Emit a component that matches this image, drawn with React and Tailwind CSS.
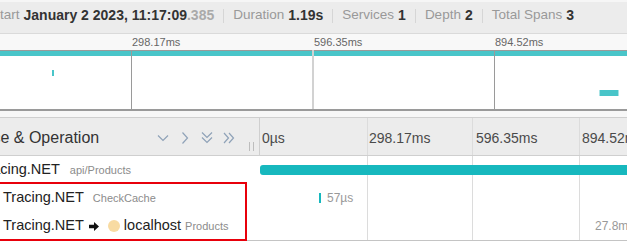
import React from "react";

const Sep = () => <div className="mx-[9px] h-[14px] w-px bg-[#d6d6d6]" />;

const ChevDown = () => (
  <svg width="12" height="12" viewBox="0 0 12 12" fill="none" stroke="#8fa2b8" strokeWidth="1.2">
    <path d="M1 3.5 L6 8.5 L11 3.5" />
  </svg>
);
const ChevRight = () => (
  <svg width="12" height="12" viewBox="0 0 12 12" fill="none" stroke="#8fa2b8" strokeWidth="1.2">
    <path d="M3.5 0.5 L8.5 6 L3.5 11.5" />
  </svg>
);
const DChevDown = () => (
  <svg width="12" height="14" viewBox="0 0 12 14" fill="none" stroke="#8fa2b8" strokeWidth="1.2">
    <path d="M1 1.5 L6 6.5 L11 1.5" />
    <path d="M1 6.5 L6 11.5 L11 6.5" />
  </svg>
);
const DChevRight = () => (
  <svg width="12" height="12" viewBox="0 0 12 12" fill="none" stroke="#8fa2b8" strokeWidth="1.2">
    <path d="M1 1 L5.5 6 L1 11" />
    <path d="M6 1 L10.5 6 L6 11" />
  </svg>
);

const GridLines = () => (
  <div className="col-start-1 row-start-1 flex h-full">
    <div className="w-[107px] shrink-0" />
    <div className="w-[105px] shrink-0 border-l border-[#dcdcdc]" />
    <div className="w-[107px] shrink-0 border-l border-[#dcdcdc]" />
    <div className="w-[107px] shrink-0 border-l border-[#dcdcdc]" />
  </div>
);

export default function App() {
  return (
    <div className="relative h-[243px] w-[627px] overflow-hidden bg-white font-['Liberation_Sans',Arial,sans-serif] whitespace-nowrap">
      {/* Trace header */}
      <div className="flex h-[34px] items-center border-t-2 border-b border-t-[#f6f6f6] border-b-[#dadada] bg-[#ececec] pb-[4px] text-[14px]">
        <div className="-ml-[9px] flex items-center">
          <span className="text-[13.5px] text-[#999]">Start</span>
          <span className="ml-[4px] font-bold text-[#333]">January 2 2023, 11:17:09</span>
          <span className="font-bold text-[#aaa]">.385</span>
          <Sep />
          <span className="text-[13.5px] text-[#999]">Duration</span>
          <span className="ml-[4px] font-bold text-[#333]">1.19s</span>
          <Sep />
          <span className="text-[13.5px] text-[#999]">Services</span>
          <span className="ml-[4px] font-bold text-[#333]">1</span>
          <Sep />
          <span className="text-[13.5px] text-[#999]">Depth</span>
          <span className="ml-[4px] font-bold text-[#333]">2</span>
          <Sep />
          <span className="text-[13.5px] text-[#999]">Total Spans</span>
          <span className="ml-[4px] font-bold text-[#333]">3</span>
        </div>
      </div>

      {/* Minimap ruler */}
      <div className="flex h-[16px] items-center bg-[#f8f8f8] text-[11px] text-[#666]">
        <div className="w-[131px] shrink-0" />
        <div className="w-[182px] shrink-0 pl-[1px]">298.17ms</div>
        <div className="w-[181px] shrink-0 pl-[1px]">596.35ms</div>
        <div className="shrink-0 pl-[1px]">894.52ms</div>
      </div>

      {/* Minimap canvas */}
      <svg width="627" height="61" viewBox="0 0 627 61" className="block">
        <rect x="0" y="0" width="627" height="1" fill="#9a9a9a" />
        <rect x="0" y="1" width="627" height="5" fill="#49c5c9" />
        <rect x="131" y="0" width="1" height="59" fill="#9a9a9a" />
        <rect x="312" y="0" width="2" height="59" fill="#d2d2d2" />
        <rect x="494" y="0" width="1" height="59" fill="#9a9a9a" />
        <rect x="52" y="20" width="2" height="6" fill="#49c5c9" />
        <rect x="600" y="40" width="18" height="6" fill="#49c5c9" />
        <rect x="599" y="40" width="1" height="6" fill="#a8e3e5" />
        <rect x="618" y="40" width="1" height="6" fill="#a8e3e5" />
        <rect x="0" y="59" width="627" height="2" fill="#9a9a9a" />
      </svg>
      <div className="h-[7px] border-b border-[#cfcfcf] bg-[#f7f7f7]" />

      {/* Table header */}
      <div className="flex h-[38px] border-b border-[#cfcfcf] bg-[#ececec]">
        <div className="flex w-[260px] shrink-0 items-center border-r border-[#cfcfcf] pt-[3px]">
          <span className="-ml-[44px] text-[16px] text-[#333]">Service &amp; Operation</span>
          <div className="ml-auto flex items-center gap-[10px]">
            <ChevDown />
            <ChevRight />
            <DChevDown />
            <DChevRight />
          </div>
          <div className="mb-[4px] ml-[14px] mr-[5px] h-[9px] w-[5px] self-end border-x border-[#bdbdbd]" />
        </div>
        <div className="flex items-center text-[14px] text-[#4a4a4a]">
          <div className="flex h-full w-[107px] shrink-0 items-center pl-[2px] pt-[3px]">0µs</div>
          <div className="flex h-full w-[105px] shrink-0 items-center border-l border-[#dcdcdc] pl-[1px] pt-[3px]">298.17ms</div>
          <div className="flex h-full w-[107px] shrink-0 items-center border-l border-[#dcdcdc] pl-[3px] pt-[3px]">596.35ms</div>
          <div className="flex h-full w-[107px] shrink-0 items-center border-l border-[#dcdcdc] pl-[2px] pt-[3px]">894.52ms</div>
        </div>
      </div>

      {/* Rows */}
      <div className="border-b border-[#c4c4c4]">
        {/* Row 1 */}
        <div className="flex h-[28px]">
          <div className="flex w-[260px] shrink-0 items-center">
            <span className="-ml-[21px] text-[14.5px] text-[#222]">Tracing.NET</span>
            <span className="ml-[10px] text-[11px] text-[#8c8c8c]">api/Products</span>
          </div>
          <div className="grid flex-1">
            <GridLines />
            <div className="col-start-1 row-start-1 flex items-center">
              <div className="h-[10px] w-[400px] rounded-l-[3px] bg-[#17b8be]" />
            </div>
          </div>
        </div>
        {/* Row 2 */}
        <div className="flex h-[28px]">
          <div className="flex w-[260px] shrink-0 items-center">
            <span className="ml-[3px] text-[14.5px] text-[#222]">Tracing.NET</span>
            <span className="ml-[9px] text-[11px] text-[#8c8c8c]">CheckCache</span>
          </div>
          <div className="grid flex-1">
            <GridLines />
            <div className="col-start-1 row-start-1 flex items-center">
              <div className="ml-[59px] h-[10px] w-[2px] bg-[#17b8be]" />
              <span className="ml-[6px] text-[12px] text-[#999]">57µs</span>
            </div>
          </div>
        </div>
        {/* Row 3 */}
        <div className="flex h-[28px]">
          <div className="flex w-[260px] shrink-0 items-center">
            <span className="ml-[3px] text-[14.5px] text-[#222]">Tracing.NET</span>
            <svg width="10" height="9" viewBox="0 0 10 9" className="ml-[5px]">
              <path d="M0 2.8 H5 V0 L10 4.5 L5 9 V6.2 H0 Z" fill="#111" />
            </svg>
            <div className="ml-[9px] h-[12px] w-[12px] rounded-full bg-[#f8dba2]" />
            <span className="ml-[4px] text-[14.5px] text-[#222]">localhost</span>
            <span className="ml-[4px] text-[11px] text-[#8c8c8c]">Products</span>
          </div>
          <div className="grid flex-1">
            <GridLines />
            <div className="col-start-1 row-start-1 flex items-center">
              <span className="ml-[335px] text-[12px] text-[#999]">27.8ms</span>
            </div>
          </div>
        </div>
      </div>

      {/* Red annotation box */}
      <div className="pointer-events-none absolute left-[-10px] top-[182px] h-[59px] w-[257px] border-2 border-[#e8000b]" />
    </div>
  );
}
